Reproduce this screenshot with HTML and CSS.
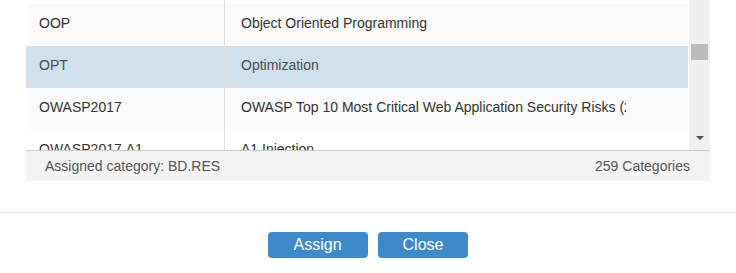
FILE: index.html
```html
<!DOCTYPE html>
<html>
<head>
<meta charset="utf-8">
<link rel="stylesheet" href="styles.css">
</head>
<body>
<div class="dialog">
  <div class="grid">
    <div class="viewport">
      <div class="rows">
        <div class="row even"><div class="cell code"></div><div class="cell name"></div></div>
        <div class="row odd"><div class="cell code">OOP</div><div class="cell name"><span class="clip">Object Oriented Programming</span></div></div>
        <div class="row selected"><div class="cell code">OPT</div><div class="cell name"><span class="clip">Optimization</span></div></div>
        <div class="row odd"><div class="cell code">OWASP2017</div><div class="cell name"><span class="clip">OWASP Top 10 Most Critical Web Application Security Risks (2017)</span></div></div>
        <div class="row even"><div class="cell code">OWASP2017.A1</div><div class="cell name"><span class="clip">A1 Injection</span></div></div>
      </div>
      <div class="vscroll">
        <div class="thumb"></div>
        <div class="arrow-down"><span class="tri"></span></div>
      </div>
    </div>
    <div class="footer">
      <span>Assigned category: BD.RES</span>
      <span>259 Categories</span>
    </div>
  </div>
  <div class="divider"></div>
  <div class="actions">
    <button class="btn">Assign</button>
    <button class="btn">Close</button>
  </div>
</div>
</body>
</html>
```

FILE: styles.css
```css
html, body {
  margin: 0;
  padding: 0;
  background: #ffffff;
}
body {
  font-family: "Liberation Sans", Arial, sans-serif;
  font-size: 14px;
  color: #333333;
}
.dialog {
  width: 736px;
}
.grid {
  margin-left: 26px;
  width: 684px;
}
.viewport {
  display: flex;
  height: 150px;
  overflow: hidden;
}
.rows {
  width: 662px;
  margin-top: -38px;
  margin-right: 1px;
}
.row {
  display: flex;
  height: 42px;
}
.row.odd { background: #fafafa; }
.row.even { background: #ffffff; }
.row.selected { background: #d1e0ed; color: #4a4a4a; }
.cell {
  box-sizing: border-box;
  padding-top: 9px;
  line-height: 20px;
  white-space: nowrap;
  overflow: hidden;
}
.cell.code {
  width: 199px;
  padding-left: 13px;
  border-right: 1px solid #dddddd;
}
.cell.name {
  flex: 1;
  padding-left: 16px;
}
.clip {
  display: block;
  width: 385px;
  overflow: hidden;
  white-space: nowrap;
}
.vscroll {
  width: 21px;
  background: #f0f0f0;
  display: flex;
  flex-direction: column;
  align-items: center;
}
.thumb {
  width: 17px;
  height: 16px;
  margin-top: 44px;
  background: #bcbcbc;
}
.arrow-down {
  margin-top: auto;
  height: 20px;
  width: 21px;
  display: flex;
  justify-content: center;
  padding-top: 6px;
  box-sizing: border-box;
}
.tri {
  width: 0;
  height: 0;
  border-left: 4px solid transparent;
  border-right: 4px solid transparent;
  border-top: 4px solid #505050;
}
.footer {
  display: flex;
  justify-content: space-between;
  border-top: 1px solid #cccccc;
  background: #f4f4f4;
  height: 30px;
  line-height: 30px;
  padding: 0 20px 0 19px;
  color: #555555;
}
.divider {
  margin-top: 31px;
  height: 1px;
  background: #e5e5e5;
}
.actions {
  display: flex;
  justify-content: center;
  gap: 10px;
  padding-top: 19px;
}
.btn {
  height: 26px;
  padding: 0 26px;
  border: none;
  border-radius: 4px;
  background: #3d8acb;
  color: #ffffff;
  font-family: "Liberation Sans", Arial, sans-serif;
  font-size: 16px;
  line-height: 26px;
}
.btn + .btn {
  padding: 0 25px;
}
```
